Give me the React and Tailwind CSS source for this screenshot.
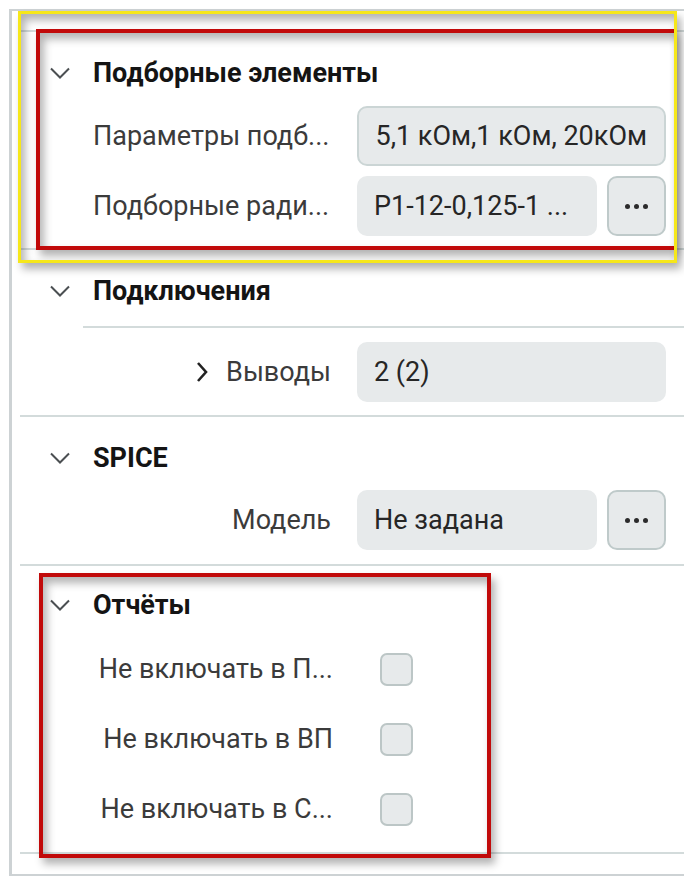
import React from "react";

const font = { fontFamily: "Roboto, 'Noto Sans', sans-serif" };

const ChevronDown = () => (
  <svg width="22" height="14" viewBox="0 0 22 14" className="shrink-0">
    <path d="M2 2.5 L11 11.5 L20 2.5" fill="none" stroke="#4b4f52" strokeWidth="2" />
  </svg>
);

const ChevronRight = () => (
  <svg width="14" height="22" viewBox="0 0 14 22" className="shrink-0">
    <path d="M3 2 L11 11 L3 20" fill="none" stroke="#222" strokeWidth="2.6" />
  </svg>
);

const Dots = () => (
  <button className="w-[59px] h-[60px] shrink-0 rounded-[10px] border-2 border-[#bfcaca] bg-[#e7eaeb] flex items-center justify-center gap-[4px]">
    <span className="w-[5px] h-[5px] rounded-full bg-[#2b2b2b]" />
    <span className="w-[5px] h-[5px] rounded-full bg-[#2b2b2b]" />
    <span className="w-[5px] h-[5px] rounded-full bg-[#2b2b2b]" />
  </button>
);

const Header = ({ title }) => (
  <div className="flex items-center h-[36px] pl-[29px] gap-[22px]">
    <ChevronDown />
    <span className="text-[27px] font-bold text-[#141414] leading-none">{title}</span>
  </div>
);

const Field = ({ children, bordered, className = "" }) => (
  <div
    className={
      "h-[60px] rounded-[10px] bg-[#e7eaeb] flex items-center px-[17px] text-[27px] text-[#262626] whitespace-nowrap " +
      (bordered ? "border-2 border-[#cbd5d5] " : "") +
      className
    }
  >
    {children}
  </div>
);

const Row = ({ label, children, chevron }) => (
  <div className="flex items-center h-[60px]">
    <div className="w-[244px] ml-[73px] flex items-center justify-end gap-[17px] pr-[6px] text-[27px] text-[#3b3b3b] whitespace-nowrap">
      {chevron && <ChevronRight />}
      <span>{label}</span>
    </div>
    <div className="flex-1 flex gap-[10px] ml-[20px] mr-[18px]">{children}</div>
  </div>
);

const CheckRow = ({ label }) => (
  <div className="flex items-center h-[59px]">
    <div className="w-[240px] ml-[73px] text-right text-[27px] text-[#3b3b3b] whitespace-nowrap">{label}</div>
    <div className="ml-[47px] w-[33px] h-[33px] rounded-[7px] border-2 border-[#bcc6c6] bg-[#e7eaeb]" />
  </div>
);

export default function App() {
  return (
    <div className="relative w-[684px] h-[883px] bg-white overflow-hidden" style={font}>
      <div className="absolute inset-0 pt-[9px]">
        <div className="ml-[9px] h-[867px] border-l-[3px] border-t-2 border-b-2 border-[#cdd2d4] pl-[8px] pt-[19px]">
          <div className="border-t-2 border-[#d3dbdb]">
            <div className="pt-[23px] pb-[12px] border-b-2 border-[#d3dbdb]">
              <Header title="Подборные элементы" />
              <div className="mt-[15px] flex flex-col gap-[10px]">
                <div className="flex items-center h-[60px]">
                  <div className="w-[264px] ml-[73px] text-[27px] text-[#3b3b3b] whitespace-nowrap">Параметры подб...</div>
                  <div className="flex-1 flex mr-[18px]">
                    <Field bordered className="flex-1">5,1 кОм,1 кОм, 20кОм</Field>
                  </div>
                </div>
                <div className="flex items-center h-[60px]">
                  <div className="w-[264px] ml-[73px] text-[27px] text-[#3b3b3b] whitespace-nowrap">Подборные ради...</div>
                  <div className="flex-1 flex gap-[10px] mr-[18px]">
                    <Field className="flex-1">P1-12-0,125-1 ...</Field>
                    <Dots />
                  </div>
                </div>
              </div>
            </div>

            <div className="pt-[23px] pb-[13px] border-b-2 border-[#d3dbdb]">
              <Header title="Подключения" />
              <div className="ml-[63px] mt-[17px] border-t-2 border-[#d3dbdb]" />
              <div className="mt-[14px]">
                <Row label="Выводы" chevron>
                  <Field className="flex-1">2 (2)</Field>
                </Row>
              </div>
            </div>

            <div className="pt-[23px] pb-[14px] border-b-2 border-[#d3dbdb]">
              <Header title="SPICE" />
              <div className="mt-[14px]">
                <Row label="Модель">
                  <Field className="flex-1">Не задана</Field>
                  <Dots />
                </Row>
              </div>
            </div>

            <div className="pt-[21px] pb-[13px] border-b-2 border-[#d3dbdb]">
              <Header title="Отчёты" />
              <div className="mt-[17px] flex flex-col gap-[11px]">
                <CheckRow label="Не включать в П..." />
                <CheckRow label="Не включать в ВП" />
                <CheckRow label="Не включать в С..." />
              </div>
            </div>
          </div>
        </div>
      </div>

      {/* annotation frames */}
      <div className="absolute left-[36px] top-[29px] w-[639px] h-[221px] border-[4px] border-r-0 border-[#c10a0a] shadow-[4px_6px_8px_rgba(0,0,0,0.3),inset_4px_6px_8px_rgba(0,0,0,0.3)]" />
      <div className="absolute left-[18px] top-[11px] w-[659px] h-[252px] border-[3px] border-[#f6e71a] shadow-[4px_6px_8px_rgba(0,0,0,0.3),inset_4px_6px_8px_rgba(0,0,0,0.3)]" />
      <div className="absolute left-[39px] top-[573px] w-[452px] h-[285px] border-[4px] border-[#c10a0a] shadow-[4px_6px_8px_rgba(0,0,0,0.3),inset_4px_6px_8px_rgba(0,0,0,0.3)]" />
    </div>
  );
}
